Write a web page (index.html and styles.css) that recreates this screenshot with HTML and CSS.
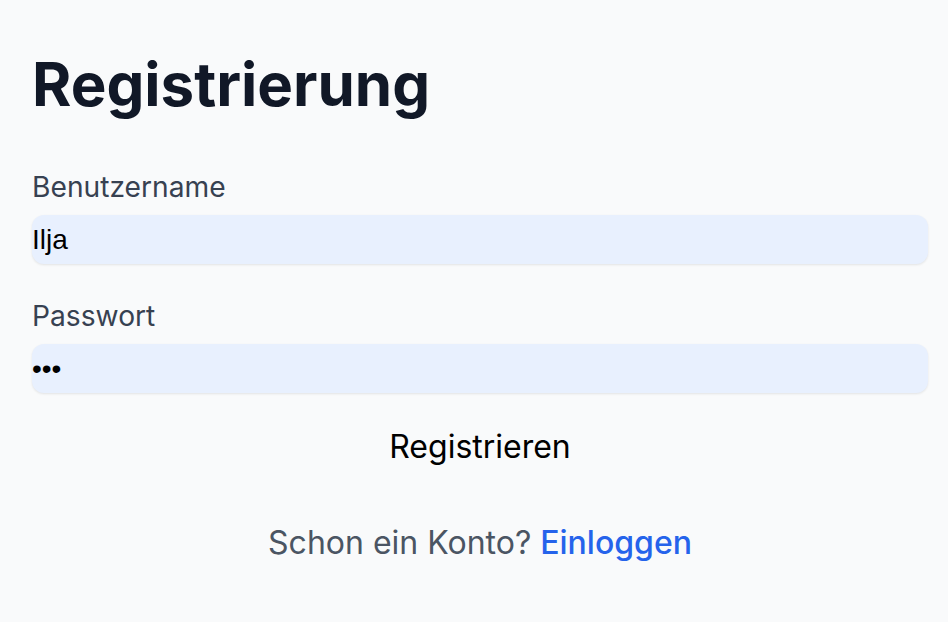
FILE: index.html
```html
<!DOCTYPE html>
<html lang="de">
<head>
<meta charset="utf-8">
<title>Registrierung</title>
<link rel="stylesheet" href="styles.css">
</head>
<body>
<main class="page">
  <h1 class="title">Registrierung</h1>
  <form class="form">
    <label class="label" for="user">Benutzername</label>
    <input class="field" id="user" type="text" value="Ilja">
    <label class="label label-gap" for="pass">Passwort</label>
    <input class="field" id="pass" type="password" value="abc">
    <button class="submit" type="button">Registrieren</button>
  </form>
  <p class="switch">Schon ein Konto? <a class="link" href="#">Einloggen</a></p>
</main>
</body>
</html>
```
FILE: styles.css
```css
html, body {
  margin: 0;
  padding: 0;
  background: #f9fafb;
}
body {
  font-family: Inter, "Noto Sans", sans-serif;
}
.page {
  padding: 54px 20px 0 32px;
}
.title {
  margin: 0;
  font-size: 60px;
  line-height: 1;
  font-weight: 700;
  color: #111827;
}
.form {
  display: flex;
  flex-direction: column;
  margin-top: 52px;
}
.label {
  font-size: 28.2px;
  line-height: 42px;
  color: #374151;
  margin-bottom: 7px;
}
.label-gap {
  margin-top: 31px;
}
.field {
  box-sizing: border-box;
  height: 49px;
  width: 100%;
  margin: 0;
  padding: 0;
  border: none;
  border-radius: 12px;
  background: #e8f0fe;
  box-shadow: 0 1px 3px rgba(0,0,0,0.06), 0 1px 2px rgba(0,0,0,0.04);
  font-family: "Liberation Sans", Arial, sans-serif;
  font-size: 28px;
  color: #000;
  outline: none;
}
.submit {
  align-self: center;
  margin-top: 30px;
  padding: 0;
  border: none;
  background: transparent;
  font-family: Inter, "Noto Sans", sans-serif;
  font-size: 32px;
  line-height: 48px;
  color: #000;
  cursor: pointer;
}
.switch {
  margin: 48px 0 0;
  text-align: center;
  font-size: 32px;
  line-height: 48px;
  color: #4b5563;
}
.link {
  color: #2563eb;
  font-weight: 500;
  text-decoration: none;
}
```
